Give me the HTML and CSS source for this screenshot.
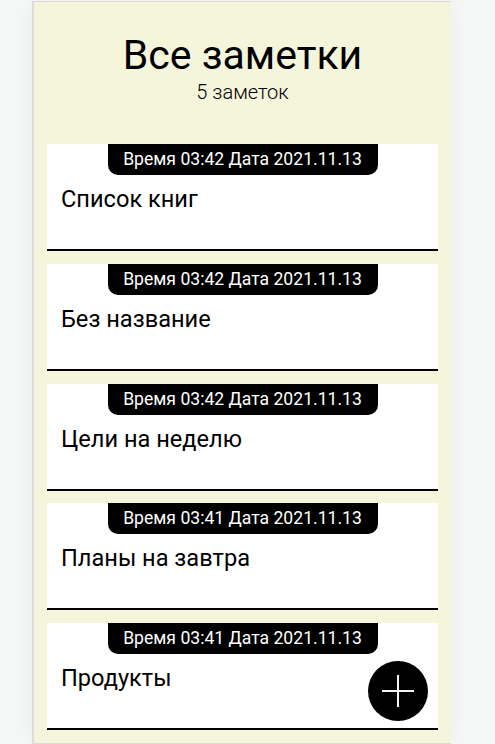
FILE: index.html
```html
<!DOCTYPE html>
<html lang="ru">
<head>
<meta charset="utf-8">
<title>Все заметки</title>
<link rel="stylesheet" href="styles.css">
</head>
<body>
<div class="app">
  <header class="header">
    <h1 class="title">Все заметки</h1>
    <p class="count">5 заметок</p>
  </header>
  <main class="notes">
    <article class="note">
      <div class="stamp">Время 03:42 Дата 2021.11.13</div>
      <h2 class="note-title">Список книг</h2>
    </article>
    <article class="note">
      <div class="stamp">Время 03:42 Дата 2021.11.13</div>
      <h2 class="note-title">Без название</h2>
    </article>
    <article class="note">
      <div class="stamp">Время 03:42 Дата 2021.11.13</div>
      <h2 class="note-title">Цели на неделю</h2>
    </article>
    <article class="note">
      <div class="stamp">Время 03:41 Дата 2021.11.13</div>
      <h2 class="note-title">Планы на завтра</h2>
    </article>
    <article class="note">
      <div class="stamp">Время 03:41 Дата 2021.11.13</div>
      <h2 class="note-title">Продукты</h2>
    </article>
  </main>
  <button class="fab" aria-label="Добавить">
    <svg width="34" height="34" viewBox="0 0 34 34"><path d="M17 1V33M1 17H33" stroke="#f2f2f2" stroke-width="2" fill="none"/></svg>
  </button>
</div>
</body>
</html>
```
FILE: styles.css
```css
html, body {
  margin: 0;
  padding: 0;
}
body {
  background: #f6f8f8;
  font-family: Roboto, "Liberation Sans", sans-serif;
  color: #000;
}
.app {
  box-sizing: border-box;
  width: 419px;
  margin: 1px 0 0 32px;
  background: #f5f5dc;
  border-top: 1px solid #dcdcdc;
  border-left: 2px solid #dcdcdc;
  border-bottom: 1px solid #dcdcdc;
  box-shadow: 0 0 24px rgba(0, 0, 0, 0.05);
  padding: 0 13px 13px;
}
.header {
  padding-top: 29px;
  text-align: center;
}
.title {
  margin: 0;
  font-size: 41px;
  font-weight: 400;
  line-height: 49px;
}
.count {
  margin: 0;
  font-size: 20px;
  font-weight: 300;
  line-height: 24px;
}
.notes {
  margin-top: 40px;
  display: flex;
  flex-direction: column;
  gap: 12.75px;
}
.note {
  height: 105px;
  background: #fff;
  border-bottom: 2px solid #000;
  display: flex;
  flex-direction: column;
}
.stamp {
  align-self: center;
  width: 270px;
  height: 31px;
  line-height: 31px;
  background: #000;
  color: #fff;
  text-align: center;
  font-size: 17.6px;
  font-weight: 400;
  border-radius: 0 0 10px 10px;
}
.note-title {
  margin: 10px 0 0 14px;
  font-size: 23.6px;
  font-weight: 400;
  line-height: 28px;
}
.fab {
  position: fixed;
  left: 368px;
  top: 661px;
  width: 60px;
  height: 60px;
  border: none;
  border-radius: 50%;
  background: #000;
  padding: 0;
  display: flex;
  align-items: center;
  justify-content: center;
}
.fab svg {
  display: block;
}
```
